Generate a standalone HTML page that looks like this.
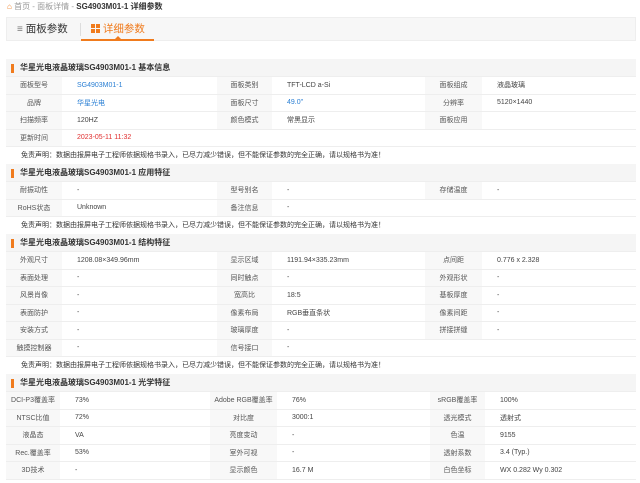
<!DOCTYPE html>
<html><head><meta charset="utf-8"><style>
*{margin:0;padding:0;box-sizing:border-box}
body{width:640px;height:483px;overflow:hidden;background:#fff;font-family:"Liberation Sans","Noto Sans CJK SC",sans-serif;color:#333;position:relative}
.bc{position:absolute;left:7px;top:1px;font-size:8px;color:#999;line-height:12px}
.bc b{color:#333;font-weight:bold}
.tabs{position:absolute;left:6px;top:17px;width:630px;height:24px;background:#f7f7f7;border:1px solid #eee}
.t{position:absolute;top:0;height:22px;line-height:22px;font-size:10.5px}
.sec{position:absolute;left:6px;width:630px}
table{border-collapse:collapse;width:630px;table-layout:fixed;font-size:7px}
td{height:17.5px;border-bottom:1px solid #eee;padding:0}
td.l{background:#f8f8f8;text-align:center;color:#555}
td.v{padding-left:15px;color:#444}
td.h{background:#f5f5f5;font-size:8px;font-weight:bold;color:#333;padding-left:14px;position:relative}
td.h:before{content:"";position:absolute;left:5px;top:5px;width:3px;height:9px;background:#f07b1d}
td.d{padding-left:15px;color:#333}
td.bl{color:#2a7fd4}td.rd{color:#e03030}
</style></head><body>
<div class="bc"><span style="color:#f07b1d">&#8962;</span> 首页 - 面板详情 - <b>SG4903M01-1 详细参数</b></div>
<div class="tabs">
<div class="t" style="left:10px;color:#333"><span style="color:#777;font-size:10px">&#8801;</span> 面板参数</div>
<div style="position:absolute;left:73px;top:5px;width:1px;height:13px;background:#ddd"></div>
<div class="t" style="left:84px;color:#f07b1d"><span style="display:inline-block;width:9px;height:9px;background:linear-gradient(#f07b1d 0 4px,transparent 4px 5px,#f07b1d 5px) ;vertical-align:-1px;-webkit-mask:linear-gradient(90deg,#000 0 4px,transparent 4px 5px,#000 5px)"></span> 详细参数</div>
<div style="position:absolute;left:74px;top:21px;width:73px;height:2px;background:#f07b1d"></div>
<div style="position:absolute;left:108px;top:18px;border:3px solid transparent;border-bottom-color:#f07b1d;border-top:0"></div>
</div>

<div class="sec" style="top:59px"><table>
<colgroup><col style="width:56px"><col style="width:155px"><col style="width:55px"><col style="width:153px"><col style="width:57px"><col></colgroup>
<tr><td class="h" colspan="6">华星光电液晶玻璃SG4903M01-1 基本信息</td></tr>
<tr><td class="l">面板型号</td><td class="v bl">SG4903M01-1</td><td class="l">面板类别</td><td class="v">TFT-LCD a-Si</td><td class="l">面板组成</td><td class="v">液晶玻璃</td></tr>
<tr><td class="l">品牌</td><td class="v bl">华星光电</td><td class="l">面板尺寸</td><td class="v bl">49.0"</td><td class="l">分辨率</td><td class="v">5120×1440</td></tr>
<tr><td class="l">扫描频率</td><td class="v">120HZ</td><td class="l">颜色模式</td><td class="v">常黑显示</td><td class="l">面板应用</td><td class="v"></td></tr>
<tr><td class="l">更新时间</td><td class="v rd" colspan="5">2023-05-11 11:32</td></tr>
<tr><td class="d" colspan="6">免责声明：数据由报屏电子工程师依据规格书录入，已尽力减少错误，但不能保证参数的完全正确，请以规格书为准！</td></tr>
</table></div>

<div class="sec" style="top:164px"><table>
<colgroup><col style="width:56px"><col style="width:155px"><col style="width:55px"><col style="width:153px"><col style="width:57px"><col></colgroup>
<tr><td class="h" colspan="6">华星光电液晶玻璃SG4903M01-1 应用特征</td></tr>
<tr><td class="l">耐振动性</td><td class="v">-</td><td class="l">型号别名</td><td class="v">-</td><td class="l">存储温度</td><td class="v">-</td></tr>
<tr><td class="l">RoHS状态</td><td class="v">Unknown</td><td class="l">备注信息</td><td class="v" colspan="3">-</td></tr>
<tr><td class="d" colspan="6">免责声明：数据由报屏电子工程师依据规格书录入，已尽力减少错误，但不能保证参数的完全正确，请以规格书为准！</td></tr>
</table></div>

<div class="sec" style="top:234px"><table>
<colgroup><col style="width:56px"><col style="width:155px"><col style="width:55px"><col style="width:153px"><col style="width:57px"><col></colgroup>
<tr><td class="h" colspan="6">华星光电液晶玻璃SG4903M01-1 结构特征</td></tr>
<tr><td class="l">外观尺寸</td><td class="v">1208.08×349.96mm</td><td class="l">显示区域</td><td class="v">1191.94×335.23mm</td><td class="l">点间距</td><td class="v">0.776 x 2.328</td></tr>
<tr><td class="l">表面处理</td><td class="v">-</td><td class="l">同时触点</td><td class="v">-</td><td class="l">外观形状</td><td class="v">-</td></tr>
<tr><td class="l">风景肖像</td><td class="v">-</td><td class="l">宽高比</td><td class="v">18:5</td><td class="l">基板厚度</td><td class="v">-</td></tr>
<tr><td class="l">表面防护</td><td class="v">-</td><td class="l">像素布局</td><td class="v">RGB垂直条状</td><td class="l">像素间距</td><td class="v">-</td></tr>
<tr><td class="l">安装方式</td><td class="v">-</td><td class="l">玻璃厚度</td><td class="v">-</td><td class="l">拼接拼缝</td><td class="v">-</td></tr>
<tr><td class="l">触摸控制器</td><td class="v">-</td><td class="l">信号接口</td><td class="v" colspan="3">-</td></tr>
<tr><td class="d" colspan="6">免责声明：数据由报屏电子工程师依据规格书录入，已尽力减少错误，但不能保证参数的完全正确，请以规格书为准！</td></tr>
</table></div>

<div class="sec" style="top:374px"><table>
<colgroup><col style="width:54px"><col style="width:150px"><col style="width:67px"><col style="width:153px"><col style="width:55px"><col></colgroup>
<tr><td class="h" colspan="6">华星光电液晶玻璃SG4903M01-1 光学特征</td></tr>
<tr><td class="l">DCI-P3覆盖率</td><td class="v">73%</td><td class="l">Adobe RGB覆盖率</td><td class="v">76%</td><td class="l">sRGB覆盖率</td><td class="v">100%</td></tr>
<tr><td class="l">NTSC比值</td><td class="v">72%</td><td class="l">对比度</td><td class="v">3000:1</td><td class="l">透光模式</td><td class="v">透射式</td></tr>
<tr><td class="l">液晶态</td><td class="v">VA</td><td class="l">亮度变动</td><td class="v">-</td><td class="l">色温</td><td class="v">9155</td></tr>
<tr><td class="l">Rec.覆盖率</td><td class="v">53%</td><td class="l">室外可视</td><td class="v">-</td><td class="l">透射系数</td><td class="v">3.4 (Typ.)</td></tr>
<tr><td class="l">3D技术</td><td class="v">-</td><td class="l">显示颜色</td><td class="v">16.7 M</td><td class="l">白色坐标</td><td class="v">WX 0.282 Wy 0.302</td></tr>
</table></div>
</body></html>
